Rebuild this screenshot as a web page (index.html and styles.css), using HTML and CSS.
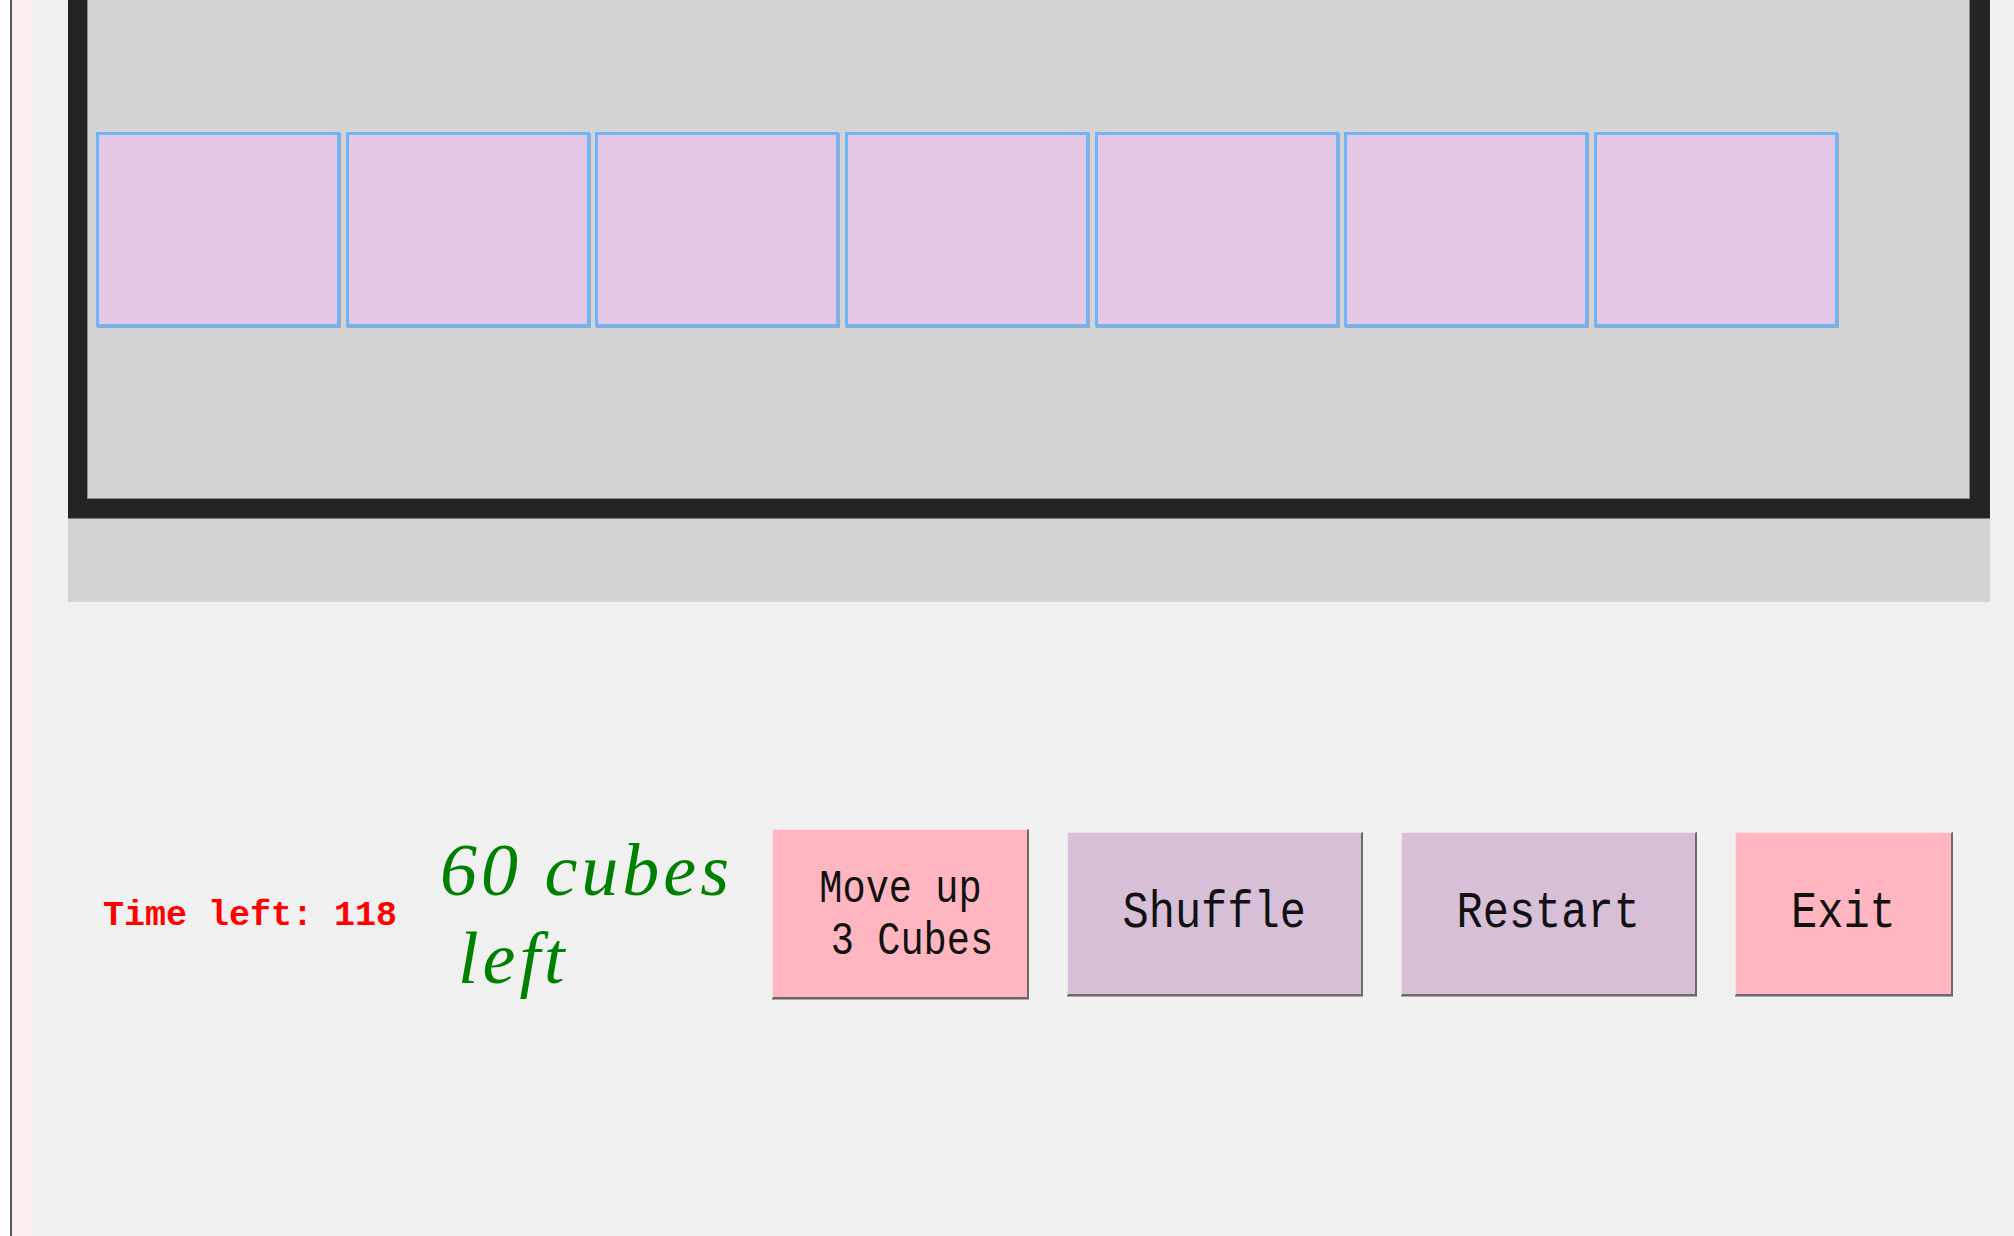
FILE: index.html
```html
<!DOCTYPE html>
<html lang="en">
<head>
<meta charset="utf-8">
<title>Cubes</title>
<link rel="stylesheet" href="styles.css">
</head>
<body>
<div class="edge-white"></div>
<div class="edge-line"></div>
<div class="edge-pink"></div>
<main class="main">
  <section class="panel">
    <div class="board">
      <div class="cube-row">
        <div class="cube"></div>
        <div class="cube"></div>
        <div class="cube"></div>
        <div class="cube"></div>
        <div class="cube"></div>
        <div class="cube"></div>
        <div class="cube"></div>
      </div>
    </div>
  </section>
  <section class="controls">
    <div class="timer">Time left: 118</div>
    <div class="count">60 cubes left</div>
    <button class="btn btn-pink btn-move"><span class="label">Move up
 3 Cubes</span></button>
    <button class="btn btn-thistle btn-wide"><span class="label">Shuffle</span></button>
    <button class="btn btn-thistle btn-wide"><span class="label">Restart</span></button>
    <button class="btn btn-pink btn-exit"><span class="label">Exit</span></button>
  </section>
</main>
</body>
</html>
```

FILE: styles.css
```css
html, body {
  margin: 0;
  padding: 0;
  height: 100%;
}

body {
  display: flex;
  background: #ffffff;
  overflow: hidden;
  font-family: "Liberation Mono", monospace;
}

.edge-white {
  width: 10px;
  background: #ffffff;
}

.edge-line {
  width: 2px;
  background: #5b5b5b;
}

.edge-pink {
  width: 20px;
  background: #fdeeed;
}

.main {
  flex: 1;
  background: #f0f0f0;
  padding: 0 24px 0 36px;
  display: flex;
  flex-direction: column;
}

.panel {
  background: #d3d3d3;
  height: 602px;
  box-sizing: border-box;
}

.board {
  box-sizing: border-box;
  height: 518px;
  border: 19px solid #242424;
  border-top: none;
  border-right-width: 20px;
  padding: 132px 0 0 9px;
  box-shadow: inset 1px 0 0 #8c8c8c, inset -1px 0 0 #8c8c8c, inset 0 -1px 0 #8c8c8c, 0 1px 0 #7c7c7c;
}

.cube-row {
  display: flex;
  gap: 5.67px;
}

.cube {
  box-sizing: border-box;
  width: 244px;
  height: 195px;
  background: #e4c7e5;
  border: 3px solid #6db4fa;
  box-shadow: 1px 1px 0 rgba(110, 110, 110, 0.45);
}

.controls {
  display: flex;
  align-items: center;
  height: 200px;
  margin-top: 212px;
  padding-left: 35px;
}

.timer {
  width: 337px;
  flex: none;
  color: #ff0000;
  font-family: "Liberation Mono", monospace;
  font-weight: bold;
  font-size: 35px;
  white-space: pre;
  margin-top: 4px;
}

.count {
  width: 332px;
  flex: none;
  box-sizing: border-box;
  color: #008000;
  font-family: "Liberation Serif", "DejaVu Serif", serif;
  font-style: italic;
  font-size: 74px;
  letter-spacing: 4px;
  line-height: 88px;
  padding-left: 18px;
  text-indent: -18px;
}

.btn {
  flex: none;
  display: flex;
  align-items: center;
  justify-content: center;
  padding: 0;
  margin: 0 0 0 38px;
  box-sizing: border-box;
  color: #111111;
  font-family: "Liberation Mono", monospace;
  border-style: solid;
  border-width: 1px 2px 2px 1px;
  border-color: rgba(255, 255, 255, 0.55) #6a6a6a #6a6a6a rgba(255, 255, 255, 0.55);
  box-shadow: 0 1px 0 #a8a8a8;
}

.btn-pink {
  background: #ffb6c1;
}

.btn-thistle {
  background: #d8bfd8;
}

.label {
  display: inline-block;
  white-space: pre;
  text-align: center;
  transform: scaleX(0.84);
}

.btn-move {
  margin-left: 0;
  width: 257px;
  height: 170px;
  font-size: 46px;
  line-height: 52px;
}

.btn-move .label {
  margin-top: 4px;
}

.btn-wide {
  width: 296px;
  height: 164px;
  font-size: 52px;
}

.btn-exit {
  width: 218px;
  height: 164px;
  font-size: 52px;
}
```
